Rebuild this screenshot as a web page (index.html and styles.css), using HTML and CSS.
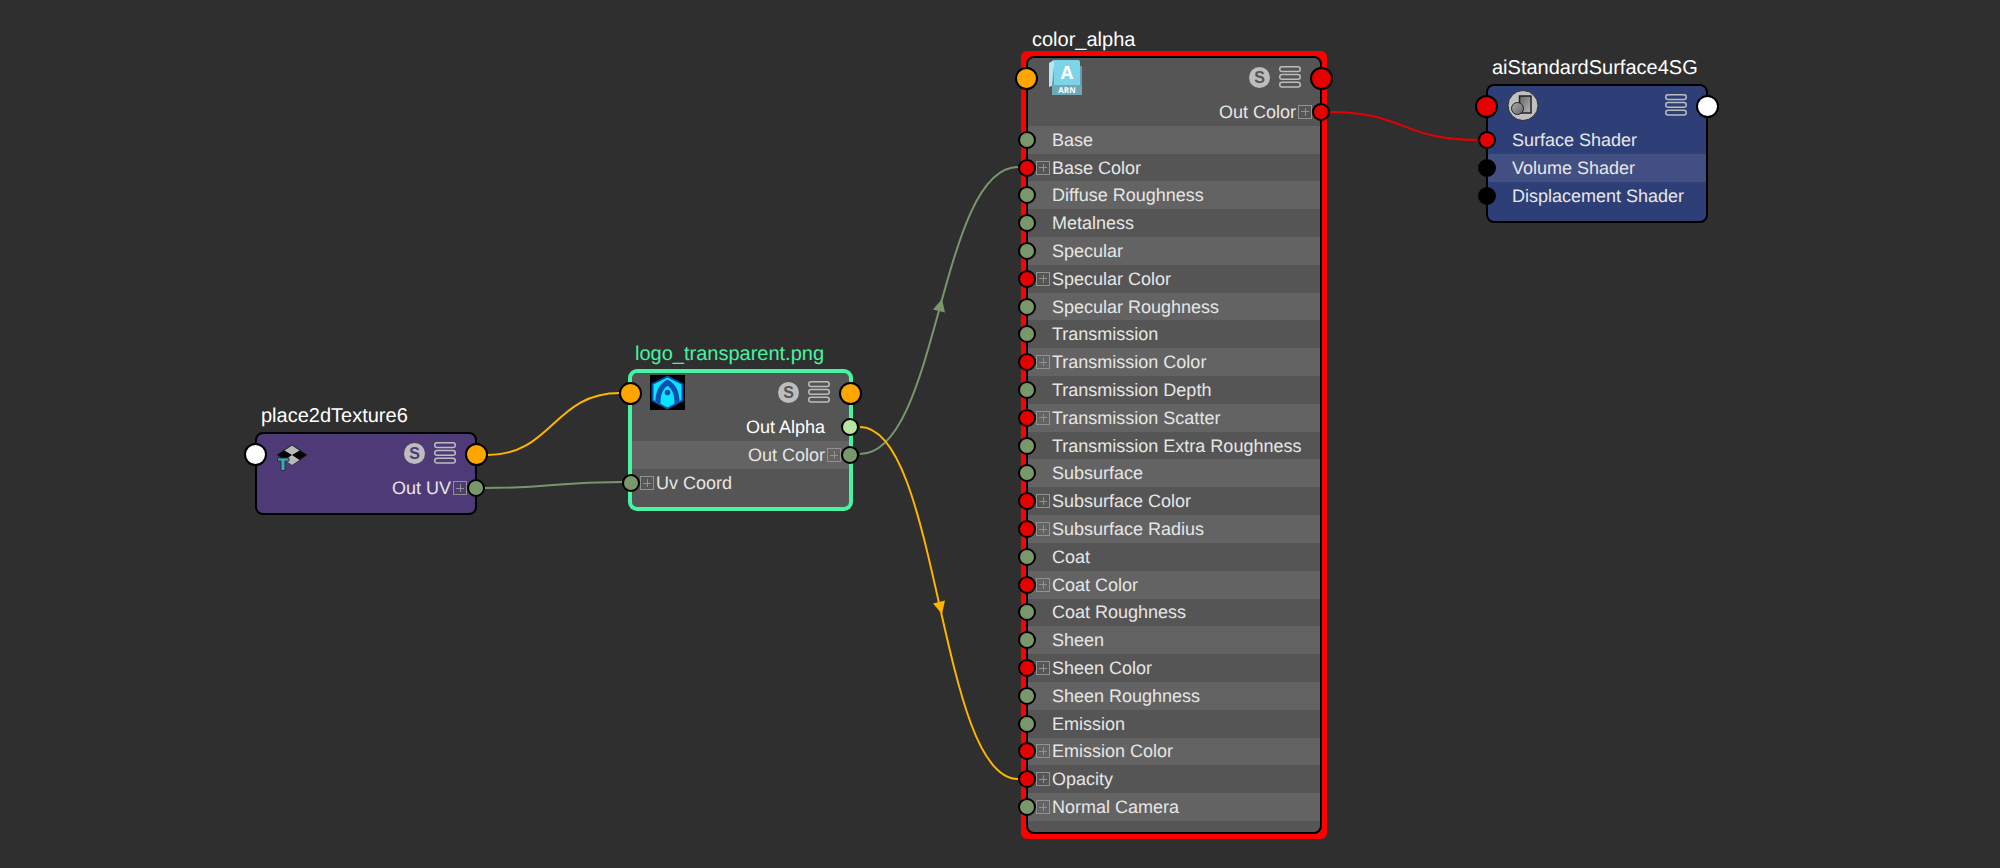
FILE: index.html
```html
<!DOCTYPE html>
<html lang="en">
<head>
    <meta charset="UTF-8">
    <meta name="viewport" content="width=device-width, initial-scale=1.0">
    <title>Node Editor</title>
    <link rel="stylesheet" href="styles.css">
</head>
<body>
    <main class="canvas">
        <!-- connections -->
        <svg class="wires" width="2000" height="868" aria-hidden="true">
            <defs>
                <symbol id="pills" viewBox="0 0 22 22">
                    <g fill="none" stroke="#bdbdbd" stroke-width="1.500">
                        <rect x=".75" y=".75" width="20.500" height="4.750" rx="2.300"/>
                        <rect x=".75" y="8.500" width="20.500" height="4.750" rx="2.300"/>
                        <rect x=".75" y="16.250" width="20.500" height="4.750" rx="2.300"/>
                    </g>
                </symbol>
            </defs>
            <path class="wire yellow" d="M487 455 C553 455 553 393 620 393"/>
            <path class="wire green" d="M485 488 C553 488 553 482 622 482"/>
            <path class="wire green" d="M860 454 C939 454 939 167 1018 167"/>
            <path class="wire yellow" d="M860 427 C939 427 939 779 1018 779"/>
            <path class="wire red" d="M1330 112 C1403 112 1403 140 1477 140"/>
            <path class="arrow green" d="M942 299 L933 309.500 L945 312.500 Z"/>
            <path class="arrow yellow" d="M942 614 L933 603.500 L945 600.500 Z"/>
        </svg>

        <section class="node place2d">
            <h2>place2dTexture6</h2>
            <div class="box">
                <header>
                    <i class="port big left white"></i>
                    <svg class="icon" viewBox="0 0 35 35">
                        <path d="M2 19 L17 9 L32 19 L17 29 Z" fill="#050505" stroke="#222" stroke-width="1"/>
                        <path d="M17 9.500 L24.500 14.500 L17 19 L9.500 14.500 Z M17 19 L24.500 24 L17 29 L9.500 24 Z" fill="#b9b9b9"/>
                        <path d="M2.500 22 H14 V25 H10 V34.500 H6 V25 H2.500 Z" fill="#3fa9b5" stroke="#20323c" stroke-width="1"/>
                    </svg>
                    <button class="solo">S</button>
                    <button class="menu" aria-label="View mode"><svg width="22" height="22"><use href="#pills"/></svg></button>
                    <i class="port big right orange"></i>
                </header>
                <ul>
                    <li class="out"><span>Out UV</span><button class="plus" aria-label="Expand Out UV"></button><i class="port right green"></i></li>
                </ul>
            </div>
        </section>

        <section class="node texture">
            <h2>logo_transparent.png</h2>
            <div class="box">
                <header>
                    <i class="port big left orange"></i>
                    <svg class="icon" viewBox="0 0 35 35">
                        <rect width="35" height="35" fill="#000"/>
                        <path d="M17.500 .5 L33.500 8.500 V26 L17.500 34.500 L1.500 26 V8.500 Z" fill="#0a4fae"/>
                        <path d="M17.500 2.500 L31.500 9.500 V25 L17.500 32.500 L3.500 25 V9.500 Z" fill="#0be3ff"/>
                        <path d="M17.500 4.500 C10 8 5.500 16 5.500 26 L10.500 29 C10.500 21 12 14 17.500 11 C23 14 24.500 21 24.500 29 L29.500 26 C29.500 16 25 8 17.500 4.500 Z" fill="#0750ad"/>
                        <circle cx="17.500" cy="17.500" r="2.800" fill="#0750ad"/>
                    </svg>
                    <button class="solo">S</button>
                    <button class="menu" aria-label="View mode"><svg width="22" height="22"><use href="#pills"/></svg></button>
                    <i class="port big right orange"></i>
                </header>
                <ul>
                    <li class="out active"><span>Out Alpha</span><i class="port right lime"></i></li>
                    <li class="out"><span>Out Color</span><button class="plus" aria-label="Expand Out Color"></button><i class="port right green"></i></li>
                    <li><i class="port left green"></i><button class="plus" aria-label="Expand Uv Coord"></button><span>Uv Coord</span></li>
                </ul>
            </div>
        </section>

        <section class="node surface">
            <h2>color_alpha</h2>
            <div class="box">
                <header>
                    <i class="port big left orange"></i>
                    <svg class="icon" viewBox="0 0 35 35">
                        <path d="M1 3 L6 0 V25 L1 27 Z" fill="#b5e6f1"/>
                        <path d="M4 25 L6 6 H34 V35 H4 Z" fill="#5f9fae"/>
                        <path d="M6 0 H30 Q32 0 32 2 V25 H6 Z" fill="#7dd3e8"/>
                        <path d="M4 25 H34 V35 H4 Z" fill="#6fa9b8"/>
                        <text class="icon-letter" x="19" y="19">A</text>
                        <text class="icon-code" x="19" y="33">ARN</text>
                    </svg>
                    <button class="solo">S</button>
                    <button class="menu" aria-label="View mode"><svg width="22" height="22"><use href="#pills"/></svg></button>
                    <i class="port big right red"></i>
                </header>
                <ul>
                    <li class="out"><span>Out Color</span><button class="plus" aria-label="Expand Out Color"></button><i class="port right red"></i></li>
                    <li><i class="port left green"></i><span>Base</span></li>
                    <li><i class="port left red"></i><button class="plus" aria-label="Expand Base Color"></button><span>Base Color</span></li>
                    <li><i class="port left green"></i><span>Diffuse Roughness</span></li>
                    <li><i class="port left green"></i><span>Metalness</span></li>
                    <li><i class="port left green"></i><span>Specular</span></li>
                    <li><i class="port left red"></i><button class="plus" aria-label="Expand Specular Color"></button><span>Specular Color</span></li>
                    <li><i class="port left green"></i><span>Specular Roughness</span></li>
                    <li><i class="port left green"></i><span>Transmission</span></li>
                    <li><i class="port left red"></i><button class="plus" aria-label="Expand Transmission Color"></button><span>Transmission Color</span></li>
                    <li><i class="port left green"></i><span>Transmission Depth</span></li>
                    <li><i class="port left red"></i><button class="plus" aria-label="Expand Transmission Scatter"></button><span>Transmission Scatter</span></li>
                    <li><i class="port left green"></i><span>Transmission Extra Roughness</span></li>
                    <li><i class="port left green"></i><span>Subsurface</span></li>
                    <li><i class="port left red"></i><button class="plus" aria-label="Expand Subsurface Color"></button><span>Subsurface Color</span></li>
                    <li><i class="port left red"></i><button class="plus" aria-label="Expand Subsurface Radius"></button><span>Subsurface Radius</span></li>
                    <li><i class="port left green"></i><span>Coat</span></li>
                    <li><i class="port left red"></i><button class="plus" aria-label="Expand Coat Color"></button><span>Coat Color</span></li>
                    <li><i class="port left green"></i><span>Coat Roughness</span></li>
                    <li><i class="port left green"></i><span>Sheen</span></li>
                    <li><i class="port left red"></i><button class="plus" aria-label="Expand Sheen Color"></button><span>Sheen Color</span></li>
                    <li><i class="port left green"></i><span>Sheen Roughness</span></li>
                    <li><i class="port left green"></i><span>Emission</span></li>
                    <li><i class="port left red"></i><button class="plus" aria-label="Expand Emission Color"></button><span>Emission Color</span></li>
                    <li><i class="port left red"></i><button class="plus" aria-label="Expand Opacity"></button><span>Opacity</span></li>
                    <li><i class="port left green"></i><button class="plus" aria-label="Expand Normal Camera"></button><span>Normal Camera</span></li>
                </ul>
            </div>
        </section>

        <section class="node shading-group">
            <h2>aiStandardSurface4SG</h2>
            <div class="box">
                <header>
                    <i class="port big left red"></i>
                    <svg class="icon" viewBox="0 0 35 35">
                        <defs>
                            <linearGradient id="shade" x1="0" y1="0" x2="1" y2="1">
                                <stop offset="0" stop-color="#666"/>
                                <stop offset="1" stop-color="#b5b5b5"/>
                            </linearGradient>
                            <linearGradient id="ball" x1="0" y1="0" x2="1" y2="1">
                                <stop offset="0" stop-color="#aaa"/>
                                <stop offset="1" stop-color="#666"/>
                            </linearGradient>
                        </defs>
                        <circle cx="17" cy="17.500" r="15" fill="#c0c0c0" stroke="#2c2c2c" stroke-width="1"/>
                        <rect x="13.500" y="8" width="11.500" height="17" fill="url(#shade)" stroke="#222" stroke-width="1.500"/>
                        <circle cx="11.500" cy="20.500" r="6" fill="url(#ball)" stroke="#222" stroke-width="1"/>
                    </svg>
                    <button class="menu" aria-label="View mode"><svg width="22" height="22"><use href="#pills"/></svg></button>
                    <i class="port big right white"></i>
                </header>
                <ul>
                    <li><i class="port left red"></i><span>Surface Shader</span></li>
                    <li><i class="port left black"></i><span>Volume Shader</span></li>
                    <li><i class="port left black"></i><span>Displacement Shader</span></li>
                </ul>
            </div>
        </section>
    </main>
</body>
</html>
```

FILE: styles.css
```css
* {
    box-sizing: border-box;
}

body {
    margin: 0;
    background: #2f2f2f;
    color: #e6e6e6;
    font-family: "Liberation Sans", Arial, sans-serif;
    font-size: 18px;
    text-rendering: geometricPrecision;
}

.canvas {
    position: relative;
    min-height: 100vh;
    overflow: hidden;
}

/* wires */
.wires {
    position: absolute;
    top: 0;
    left: 0;
}

.wire {
    fill: none;
    stroke-width: 2;
}

.wire.yellow { stroke: #ffb400; }
.wire.green { stroke: #78976b; }
.wire.red { stroke: #e60000; }
.arrow.yellow { fill: #ffb400; }
.arrow.green { fill: #78976b; }

/* nodes */
.node {
    --fill: #555;
    --stripe: #636363;
    position: absolute;
    width: 222px;
}

.place2d {
    --fill: #4f3a78;
    left: 255px;
    top: 403px;
}

.texture {
    left: 629px;
    top: 341px;
    width: 223px;
}

.surface {
    left: 1026px;
    top: 27px;
    width: 296px;
}

.shading-group {
    --fill: #2e3f78;
    --stripe: #414f83;
    left: 1486px;
    top: 55px;
}

.node h2 {
    margin: 0 0 4px;
    padding: 1px 0 0 6px;
    color: #fff;
    font-size: 20px;
    font-weight: normal;
    line-height: 24px;
}

.texture h2 {
    color: #45f5a1;
}

.box {
    padding-bottom: 11px;
    background: var(--fill);
    border: 2px solid #000;
    border-radius: 8px;
}

.texture .box {
    padding-bottom: 10px;
    border: 3px solid #45f5a1;
    box-shadow: 0 0 0 1px #45f5a1;
}

/* selection frame, squarer than the box inside it */
.surface {
    isolation: isolate;
}

.surface .box {
    position: relative;
}

.surface .box::before {
    content: "";
    position: absolute;
    inset: -7px;
    z-index: -1;
    border: 10px solid #f00;
    border-radius: 6px;
}

header {
    position: relative;
    display: flex;
    align-items: center;
    gap: 9px;
    height: 40px;
    padding: 0 19px 2px 18px;
}

.surface header {
    padding-left: 20px;
}

.icon {
    width: 35px;
    height: 35px;
    margin-right: auto;
}

.icon-letter,
.icon-code {
    fill: #fff;
    font-family: "Open Sans", sans-serif;
    font-weight: bold;
    text-anchor: middle;
}

.icon-letter { font-size: 18px; }
.icon-code { font-size: 8px; }

button {
    padding: 0;
    background: none;
    border: none;
    cursor: pointer;
    font-family: inherit;
}

.solo {
    width: 21px;
    height: 21px;
    background: #bdbdbd;
    border-radius: 50%;
    color: var(--fill);
    font-size: 16px;
    font-weight: bold;
    line-height: 21px;
}

.menu svg {
    display: block;
}

/* attribute rows */
ul {
    display: grid;
    grid-auto-rows: 28px;
    margin: 0;
    padding: 0;
    list-style: none;
}

/* the full list is packed a little tighter than the short ones */
.surface ul {
    grid-auto-rows: 1fr;
    height: 723px;
}

li {
    position: relative;
    display: grid;
    grid-template-columns: 14px 1fr;
    align-items: center;
    column-gap: 2px;
    min-height: 0;
    padding: 0 8px;
    line-height: 20px;
    white-space: nowrap;
}

li:nth-child(even) {
    background: var(--stripe);
}

li span {
    grid-column: 2;
    grid-row: 1;
}

.out {
    grid-template-columns: 1fr 14px;
}

.out span {
    grid-column: 1;
    text-align: right;
}

.active {
    color: #fff;
}

.plus {
    grid-row: 1;
    width: 14px;
    height: 14px;
    border: 1px solid #919191;
    background:
        linear-gradient(#919191, #919191) center / 8px 1px no-repeat,
        linear-gradient(#919191, #919191) center / 1px 8px no-repeat;
}

/* ports straddle the node border */
.port {
    position: absolute;
    top: 0;
    bottom: 0;
    width: 18px;
    height: 18px;
    margin: auto 0;
    border: 2px solid #000;
    border-radius: 50%;
}

.port.left { left: -10px; }
.port.right { right: -10px; }

.port.big {
    width: 23px;
    height: 23px;
}

.port.big.left { left: -13px; }
.port.big.right { right: -13px; }

.port.white { background: #fff; }
.port.black { background: #000; }
.port.orange { background: #ffa500; }
.port.red { background: #e60000; }
.port.green { background: #78976b; }
.port.lime { background: #b5e6a0; }
```
